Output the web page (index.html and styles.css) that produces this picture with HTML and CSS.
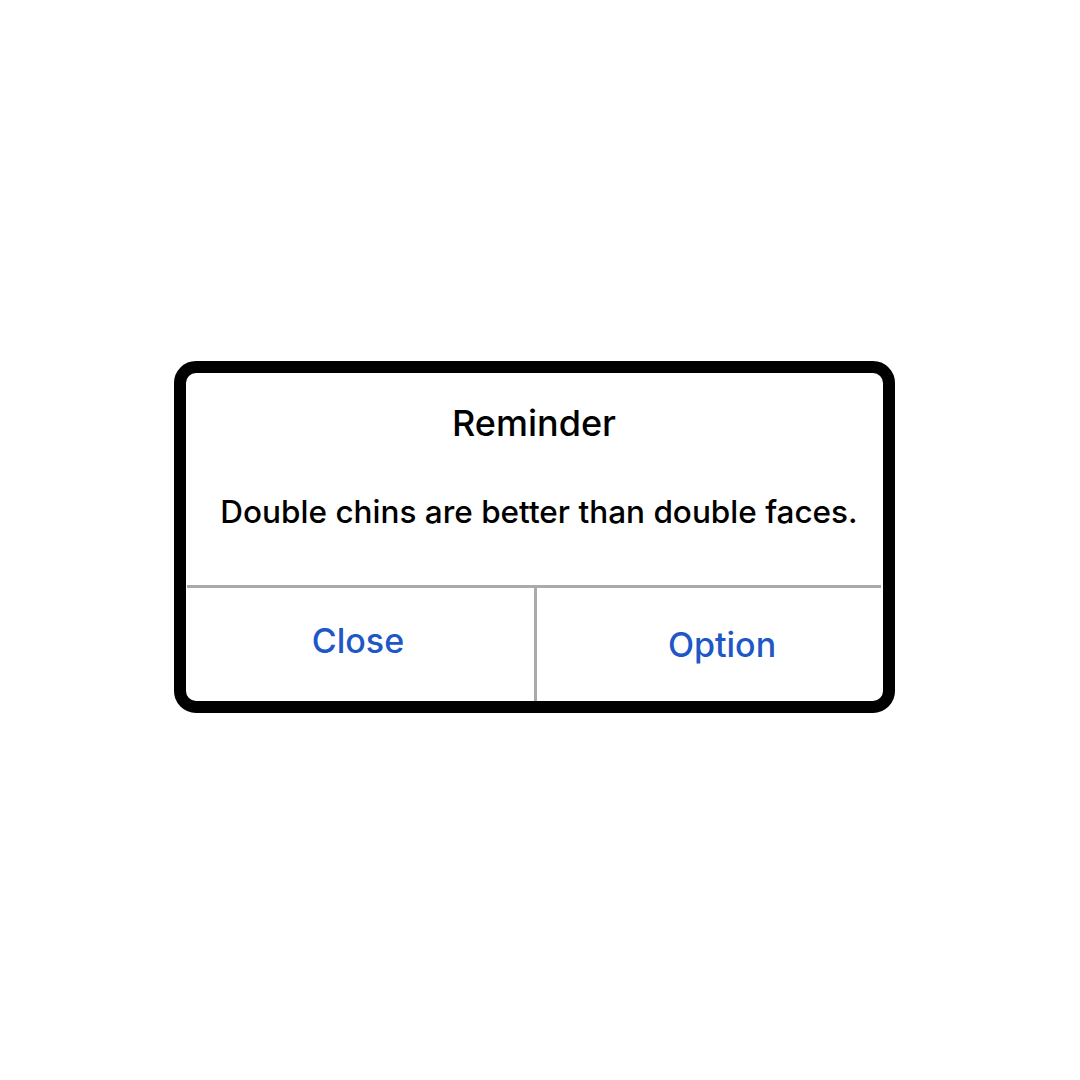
FILE: index.html
```html
<!DOCTYPE html>
<html lang="en">
<head>
<meta charset="utf-8">
<title>Reminder</title>
<link rel="stylesheet" href="styles.css">
</head>
<body>
<div class="stage">
  <div class="dialog">
    <div class="content">
      <div class="title">Reminder</div>
      <div class="message">Double chins are better than double faces.</div>
    </div>
    <div class="actions">
      <div class="action action-close">Close</div>
      <div class="action action-option">Option</div>
    </div>
  </div>
</div>
</body>
</html>
```

FILE: styles.css
```css
html, body {
  margin: 0;
  padding: 0;
  background: #ffffff;
}

.stage {
  width: 1080px;
  height: 1080px;
  padding: 361px 0 0 174px;
  box-sizing: border-box;
}

.dialog {
  width: 721px;
  height: 352px;
  box-sizing: border-box;
  border: 12px solid #000;
  border-radius: 22px;
  background: #fff;
  display: flex;
  flex-direction: column;
  font-family: Inter, "Liberation Sans", sans-serif;
  color: #000;
}

.content {
  height: 212px;
  display: flex;
  flex-direction: column;
  align-items: center;
  border-bottom: 3px solid #aaaaaa;
  margin: 0 2px 0 1px;
}

.title {
  margin-top: 28px;
  font-size: 36px;
  line-height: 44px;
  font-weight: 500;
}

.message {
  margin-top: 47px;
  padding-left: 10px;
  font-size: 31.5px;
  line-height: 40px;
  font-weight: 500;
}

.actions {
  flex: 1;
  display: flex;
}

.action {
  display: flex;
  justify-content: center;
  align-items: center;
  box-sizing: border-box;
  color: #2057c6;
  font-size: 34px;
  font-weight: 500;
}

.action-close {
  flex: 0 0 351px;
  border-right: 3px solid #aaaaaa;
  margin-top: -3px;
  padding-top: 3px;
  padding-bottom: 8px;
  padding-right: 4px;
}

.action-option {
  flex: 1 1 0;
  padding-left: 24px;
}
```
